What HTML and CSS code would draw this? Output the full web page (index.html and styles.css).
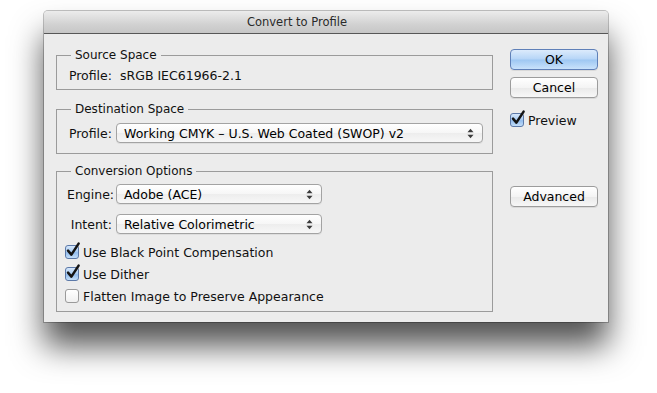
FILE: index.html
```html
<!DOCTYPE html>
<html lang="en">
<head>
    <meta charset="UTF-8">
    <title>Convert to Profile</title>
    <link rel="stylesheet" href="styles.css">
</head>
<body>
    <div class="window">
        <div class="titlebar">Convert to Profile</div>

        <div class="content">
            <div class="groups">
                <fieldset class="group group-source">
                    <legend>Source Space</legend>
                    <div class="row">
                        <span class="label">Profile:</span>
                        <span class="value">sRGB IEC61966-2.1</span>
                    </div>
                </fieldset>

                <fieldset class="group group-dest">
                    <legend>Destination Space</legend>
                    <div class="row">
                        <span class="label">Profile:</span>
                        <div class="select select-wide">
                            <span>Working CMYK &ndash; U.S. Web Coated (SWOP) v2</span>
                            <svg class="arrows" width="7" height="11" viewBox="0 0 7 11"><polygon points="0.5,4.2 3.5,0.8 6.5,4.2"/><polygon points="0.5,6.8 3.5,10.2 6.5,6.8"/></svg>
                        </div>
                    </div>
                </fieldset>

                <fieldset class="group group-options">
                    <legend>Conversion Options</legend>
                    <div class="row">
                        <span class="label">Engine:</span>
                        <div class="select">
                            <span>Adobe (ACE)</span>
                            <svg class="arrows" width="7" height="11" viewBox="0 0 7 11"><polygon points="0.5,4.2 3.5,0.8 6.5,4.2"/><polygon points="0.5,6.8 3.5,10.2 6.5,6.8"/></svg>
                        </div>
                    </div>
                    <div class="row row-intent">
                        <span class="label">Intent:</span>
                        <div class="select">
                            <span>Relative Colorimetric</span>
                            <svg class="arrows" width="7" height="11" viewBox="0 0 7 11"><polygon points="0.5,4.2 3.5,0.8 6.5,4.2"/><polygon points="0.5,6.8 3.5,10.2 6.5,6.8"/></svg>
                        </div>
                    </div>

                    <div class="checks">
                        <label class="check">
                            <span class="box checked"><svg width="16" height="16" viewBox="0 0 16 16"><path d="M3 7.6 L6.4 11.6 L13.6 0.6" /></svg></span>
                            Use Black Point Compensation
                        </label>
                        <label class="check">
                            <span class="box checked"><svg width="16" height="16" viewBox="0 0 16 16"><path d="M3 7.6 L6.4 11.6 L13.6 0.6" /></svg></span>
                            Use Dither
                        </label>
                        <label class="check">
                            <span class="box"></span>
                            Flatten Image to Preserve Appearance
                        </label>
                    </div>
                </fieldset>
            </div>

            <div class="actions">
                <button class="btn btn-default">OK</button>
                <button class="btn">Cancel</button>
                <label class="check check-preview">
                    <span class="box checked"><svg width="16" height="16" viewBox="0 0 16 16"><path d="M3 7.6 L6.4 11.6 L13.6 0.6" /></svg></span>
                    Preview
                </label>
                <button class="btn btn-advanced">Advanced</button>
            </div>
        </div>
    </div>
</body>
</html>
```

FILE: styles.css
```css
body, html {
    margin: 0;
    padding: 0;
    background: #ffffff;
}

html {
    height: 100%;
}

body {
    min-height: 393px;
    box-sizing: border-box;
    padding: 11px 0 0 44px;
    font-family: 'DejaVu Sans', 'Liberation Sans', sans-serif;
    font-size: 12.5px;
    color: #111111;
}

.window {
    width: 564px;
    height: 311px;
    background: #ececec;
    border-radius: 4px 4px 0 0;
    box-shadow: 0 0 0 1px rgba(0, 0, 0, 0.24), 0 24px 32px rgba(0, 0, 0, 0.68);
    display: flex;
    flex-direction: column;
}

.titlebar {
    height: 22px;
    line-height: 22px;
    text-align: center;
    padding-right: 58px;
    font-size: 11.5px;
    color: #2a2a2a;
    background: linear-gradient(#ececec, #d2d2d2 60%, #c6c6c6);
    border-bottom: 1px solid #575757;
    border-radius: 4px 4px 0 0;
}

.content {
    display: flex;
    padding: 13px 11px 0 12px;
}

.groups {
    width: 437px;
    display: flex;
    flex-direction: column;
}

.group {
    margin: 0;
    border: 1px solid #9b9b9b;
    padding: 4px 9px 6px 10px;
    min-width: 0;
}

.group legend {
    margin-left: 4px;
    padding: 0 4px;
    font-size: 12px;
    line-height: 16px;
    height: 16px;
}

.row {
    display: flex;
    align-items: center;
    gap: 4px;
    height: 16px;
}

.label {
    width: 45px;
    text-align: right;
    flex: none;
}

.group-source .row {
    gap: 8px;
}

.group-dest {
    margin-top: 11px;
    padding-top: 6px;
    padding-bottom: 10px;
}

.group-dest .row,
.group-options .row {
    height: 20px;
}

.group-options {
    margin-top: 9px;
    padding-top: 5px;
    padding-bottom: 4px;
}

.row-intent {
    margin-top: 10px;
}

.select {
    width: 206px;
    height: 20px;
    box-sizing: border-box;
    border: 1px solid #a3a3a3;
    border-radius: 4px;
    background: linear-gradient(#ffffff, #f6f6f6 50%, #ededed 51%, #f7f7f7);
    box-shadow: 0 1px 0 rgba(0, 0, 0, 0.06);
    display: flex;
    align-items: center;
    justify-content: space-between;
    padding: 0 8px 0 7px;
    color: #000000;
}

.select-wide {
    width: 367px;
}

.arrows {
    fill: #3a3a3a;
}

.checks {
    margin-top: 7px;
    margin-left: -2px;
    display: flex;
    flex-direction: column;
}

.check {
    display: flex;
    align-items: center;
    gap: 4px;
    height: 22px;
}

.box {
    width: 14px;
    height: 14px;
    box-sizing: border-box;
    border: 1px solid #9a9a9a;
    border-radius: 3px;
    background: linear-gradient(#ffffff, #f0f0f0);
    position: relative;
    flex: none;
}

.box.checked {
    border-color: #5c79a8;
    background: linear-gradient(#d6e7fb, #a7cbf2 50%, #93bdee 55%, #c3def9);
}

.box svg {
    position: absolute;
    left: -1px;
    top: -3px;
    overflow: visible;
}

.box svg path {
    fill: none;
    stroke: #141414;
    stroke-width: 2.5;
    stroke-linecap: round;
    stroke-linejoin: round;
}

.actions {
    width: 88px;
    margin-left: 17px;
    padding-top: 2px;
    display: flex;
    flex-direction: column;
}

.btn {
    width: 88px;
    height: 21px;
    padding: 0;
    border: 1px solid #9c9c9c;
    border-radius: 4px;
    font-family: 'DejaVu Sans', 'Liberation Sans', sans-serif;
    font-size: 12.5px;
    color: #000000;
    background: linear-gradient(#ffffff, #f4f4f4 50%, #e9e9e9 51%, #f7f7f7);
    box-shadow: 0 1px 0 rgba(0, 0, 0, 0.08);
}

.btn-default {
    border-color: #5f80b8;
    background: linear-gradient(#dcebfc, #b6d5f7 48%, #9ec7f2 52%, #c9e2fb);
}

.btn + .btn {
    margin-top: 7px;
}

.check-preview {
    margin-top: 14px;
    height: 16px;
}

.btn-advanced {
    margin-top: 58px;
}
```
